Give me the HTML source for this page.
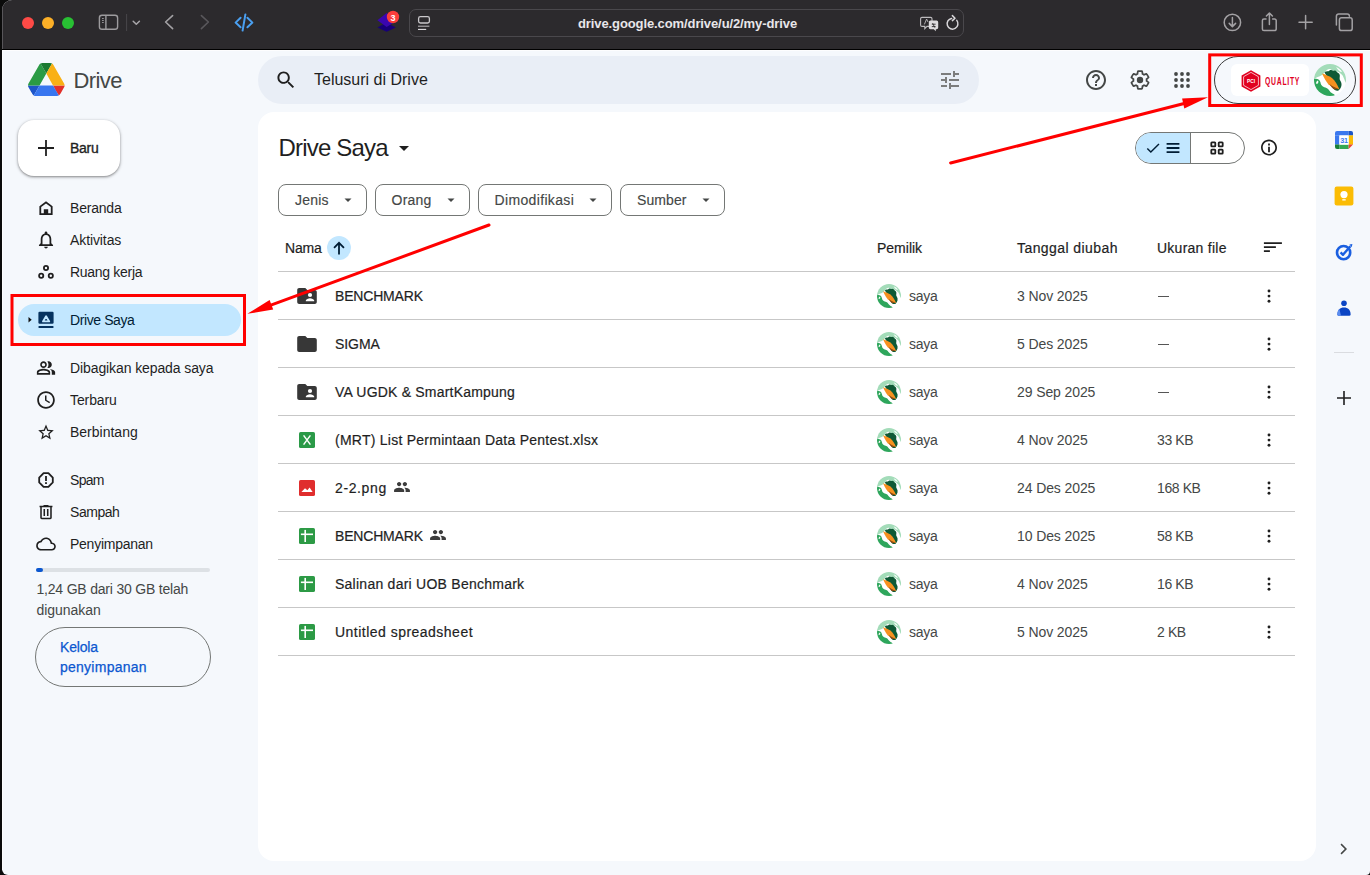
<!DOCTYPE html>
<html><head><meta charset="utf-8">
<style>
*{box-sizing:border-box;margin:0;padding:0}
html,body{width:1370px;height:875px;overflow:hidden;background:#0b0b0b;font-family:"Liberation Sans",sans-serif}
#win{position:absolute;left:2px;top:0;width:1368px;height:875px;background:#f5f8fc;border-radius:10px 0 4px 6px;overflow:hidden}
#tb{position:absolute;left:0;top:0;width:1368px;height:50px;background:#2c2a2d;border-bottom:1px solid #000}
#tbl{position:absolute;left:0;top:4px;width:1px;height:45px;background:#58565a}
.tl{position:absolute;top:17px;width:12px;height:12px;border-radius:50%}
.url{position:absolute;left:407px;top:9px;width:555px;height:28px;border:1px solid #4a484c;border-radius:7px}
.t{position:absolute;white-space:nowrap;color:#1f1f1f;line-height:1}
svg{position:absolute;overflow:visible}
.nav{font-size:14px;color:#1f1f1f}
.chip{position:absolute;top:184px;height:32px;border:1px solid #747775;border-radius:8px}
.hdr{font-size:14px;color:#1f1f1f;font-weight:normal}
.row{position:absolute;left:278px;width:1017px;height:1px;background:#c7c7c7}
.nm{font-size:14px;color:#1f1f1f}
.sub{font-size:14px;color:#444746}
.chipt{-webkit-text-stroke:0.15px #444746}
</style></head>
<body>
<svg width="0" height="0" style="position:absolute">
  <defs>
    <clipPath id="avc"><circle cx="16" cy="16" r="16"/></clipPath>
    <symbol id="avatar" viewBox="0 0 32 32">
    <g clip-path="url(#avc)">
      <rect width="32" height="32" fill="#ffffff"/>
      <path d="M0 0 H32 V19 C30 16 30 12 27 10 C24 6 20 8 17 5.5 C13 3.5 11 9 8 11 C5 13 2 13 0 15.5Z" fill="#a3dcb9"/>
      <path d="M22 3 C25 4 27 6 28 8 C26 8 24 6 22 3Z" fill="#ffffff"/>
      <path d="M0 15 C3 14 6 15.5 6.5 18.5 C7 22 9.5 23 12.5 24 C15 25 15.5 28 18.5 29.5 C20 30 21 31 21 32 H0Z" fill="#2ea65c"/>
      <path d="M4 16.5 C5 18 4 20 2.5 20 C1.5 19 2.5 17 4 16.5Z" fill="#ffffff"/>
      <path d="M10.5 8.5 C12 6.5 14 8 15.5 6.5 C17 5 18.5 7.5 20.5 6.5 C22 6 23 8.5 25 9.5 C27 12 24.5 14 26.5 17 C28.5 20 27.5 24 24.5 26.5 C22.5 27.5 20.5 26 19 24.5 L14 14Z" fill="#0f5a36"/>
      <path d="M8 9.5 C11.5 10.5 15 12 18 14 C21 16.5 23.5 21 25.5 25.5 C21.5 24.5 17.5 22.5 14.5 20.5 C12 17.5 10 13.5 8 9.5Z" fill="#f7911f"/>
      <path d="M15.5 20 C18 22 21 23.5 24.5 25 L20.5 25.5 C18.5 24.5 16.5 22.5 15.5 20Z" fill="#8c4b12"/>
    </g>
    </symbol>
  </defs>
</svg>
<div id="win">
  <!-- ============ SAFARI TOOLBAR ============ -->
  <div id="tb">
    <div id="tbl"></div>
  </div>
  <div style="position:absolute;left:0;top:50px;width:1368px;height:1px;background:#fdfdfe"></div>
  <div style="position:absolute;left:0;top:50px;width:1px;height:820px;background:#fdfdfe"></div>
  <div id="tb2" style="position:absolute;left:0;top:0;width:1368px;height:50px">
    <div class="tl" style="left:20px;background:#fe4a46"></div>
    <div class="tl" style="left:40px;background:#fdb027"></div>
    <div class="tl" style="left:60px;background:#28c033"></div>
    <!-- sidebar icon -->
    <svg style="left:0;top:0" width="1368" height="50">
      <g fill="none" stroke="#9d9b9e" stroke-width="1.4">
        <rect x="97.4" y="15.3" width="18.2" height="14" rx="2.6"/>
        <line x1="103.9" y1="15.5" x2="103.9" y2="29"/>
      </g>
      <g stroke="#9d9b9e" stroke-width="1.1">
        <line x1="100.1" y1="18.5" x2="101.7" y2="18.5"/>
        <line x1="100.1" y1="20.5" x2="101.7" y2="20.5"/>
        <line x1="100.1" y1="22.5" x2="101.7" y2="22.5"/>
      </g>
      <line x1="124.6" y1="14" x2="124.6" y2="31" stroke="#48464a" stroke-width="1"/>
      <path d="M131.2 21.2 L134.3 24.2 L137.4 21.2" fill="none" stroke="#a9a7aa" stroke-width="1.5" stroke-linecap="round" stroke-linejoin="round"/>
      <path d="M170.6 15.6 L163.6 22 L170.6 28.6" fill="none" stroke="#a3a1a4" stroke-width="1.6" stroke-linecap="round" stroke-linejoin="round"/>
      <path d="M199.4 15.6 L206.4 22 L199.4 28.6" fill="none" stroke="#59575b" stroke-width="1.6" stroke-linecap="round" stroke-linejoin="round"/>
      <g fill="none" stroke="#4a9ff0" stroke-width="2" stroke-linecap="round" stroke-linejoin="round">
        <path d="M238.6 17.8 L233.6 22.6 L238.6 27.2"/>
        <path d="M245.4 17.8 L250.4 22.6 L245.4 27.2"/>
        <path d="M243.4 14.4 L240.6 30.6"/>
      </g>
      <!-- extension -->
      <path d="M384.6 22.6 L393.8 27.4 L384.6 31.8 L375.4 27.4 Z" fill="#170078"/>
      <path d="M384.6 13 L395.4 20.2 L384.6 27 L375.4 20.2 Z" fill="#3a06b0"/>
      <circle cx="391" cy="17" r="6.2" fill="#fb3e3c"/>
      <text x="391" y="20.6" font-family="Liberation Sans" font-size="9" fill="#fff" text-anchor="middle" font-weight="bold">3</text>
      <!-- url icon -->
      <g fill="none" stroke="#c9c7ca" stroke-width="1.3">
        <rect x="416.6" y="16.6" width="10.8" height="6.4" rx="1.8"/>
      </g>
      <line x1="416" y1="26.2" x2="427.4" y2="26.2" stroke="#b4b2b5" stroke-width="1.1"/>
      <line x1="416" y1="29.4" x2="424.2" y2="29.4" stroke="#e2e0e3" stroke-width="1.1"/>
      <!-- translate -->
      <g>
        <path d="M920 17.4 h8.6 a1.4 1.4 0 0 1 1.4 1.4 v6.2 a1.4 1.4 0 0 1 -1.4 1.4 h-3.6 l-2.2 2.2 v-2.2 h-2.8 a1.4 1.4 0 0 1 -1.4 -1.4 v-6.2 a1.4 1.4 0 0 1 1.4 -1.4z" fill="none" stroke="#bdbbbe" stroke-width="1.1"/>
        <path d="M928.4 20.6 h6.2 a1.6 1.6 0 0 1 1.6 1.6 v5.4 a1.6 1.6 0 0 1 -1.6 1.6 h-0.8 v2 l-2 -2 h-3.4 a1.6 1.6 0 0 1 -1.6 -1.6 v-5.4 a1.6 1.6 0 0 1 1.6 -1.6z" fill="#dedcdf"/>
        <path d="M929.8 24.2 h3.8 M929.8 26.6 h3.8 M930.6 23.2 L932.8 27.6" stroke="#2c2a2d" stroke-width="0.9"/>
        <path d="M922.4 24.4 L924.6 19 L926 22" fill="none" stroke="#bdbbbe" stroke-width="0.9"/>
      </g>
      <!-- reload -->
      <path d="M954.8 20.4 A5.4 5.4 0 1 1 949.6 18.4" fill="none" stroke="#d9d7da" stroke-width="1.5" stroke-linecap="round"/>
      <path d="M950.4 15.6 L953 18.2 L950.4 20.6" fill="none" stroke="#d9d7da" stroke-width="1.5" stroke-linecap="round" stroke-linejoin="round"/>
      <!-- right icons -->
      <g fill="none" stroke="#a3a1a4" stroke-width="1.5" stroke-linecap="round" stroke-linejoin="round">
        <circle cx="1230.4" cy="22.4" r="8.2"/>
        <path d="M1230.4 17.6 V26.4 M1227.2 23.4 L1230.4 26.6 L1233.6 23.4"/>
        <g transform="translate(1 0)"><path d="M1263 19 h-2 a1.6 1.6 0 0 0 -1.6 1.6 v8.4 a1.6 1.6 0 0 0 1.6 1.6 h10.6 a1.6 1.6 0 0 0 1.6 -1.6 v-8.4 a1.6 1.6 0 0 0 -1.6 -1.6 h-2"/>
        <path d="M1266.4 24.6 V13.2 M1263.4 16 L1266.4 13 L1269.4 16"/></g>
        <path d="M1303.6 15.6 V28.8 M1297 22.2 H1310.2"/>
        <path d="M1334.4 25 V16.2 a2.2 2.2 0 0 1 2.2 -2.2 h8.6 a2.2 2.2 0 0 1 2.2 2.2"/>
        <rect x="1337.4" y="17.8" width="12.8" height="12.8" rx="2.2"/>
      </g>
    </svg>
    <div class="url"></div>
    <div class="t" style="left:576px;top:16.6px;font-size:13px;font-weight:bold;color:#e8e6e9;letter-spacing:-0.1px">drive.google.com/drive/u/2/my-drive</div>
  </div>
  <!-- ============ DRIVE HEADER ============ -->
  <svg style="left:25.7px;top:63px" width="36.6" height="33" viewBox="0 0 87.3 78" preserveAspectRatio="none">
    <path d="m6.6 66.85 3.85 6.65c.8 1.4 1.95 2.5 3.3 3.3l13.75-23.8h-27.5c0 1.55.4 3.1 1.2 4.5z" fill="#1e55c8"/>
    <path d="m43.65 25-13.75-23.8c-1.35.8-2.5 1.9-3.3 3.3l-25.4 44a9.06 9.06 0 0 0 -1.2 4.5h27.5z" fill="#2b9b45"/>
    <path d="m73.55 76.8c1.35-.8 2.5-1.9 3.3-3.3l1.6-2.75 7.65-13.25c.8-1.4 1.2-2.95 1.2-4.5h-27.502l5.852 11.5z" fill="#e2302a"/>
    <path d="m43.65 25 13.75-23.8c-1.35-.8-2.9-1.2-4.5-1.2h-18.5c-1.6 0-3.15.45-4.5 1.2z" fill="#1b7a31"/>
    <path d="m59.8 53h-32.3l-13.75 23.8c1.35.8 2.9 1.2 4.5 1.2h50.8c1.6 0 3.15-.45 4.5-1.2z" fill="#3876ef"/>
    <path d="m73.4 26.5-12.7-22c-.8-1.4-1.95-2.5-3.3-3.3l-13.75 23.8 16.15 28h27.45c0-1.55-.4-3.1-1.2-4.5z" fill="#f9b014"/>
  </svg>
  <div class="t" style="left:71.5px;top:69.5px;font-size:22px;color:#444746;letter-spacing:-0.6px">Drive</div>
  <div style="position:absolute;left:256px;top:56px;width:721px;height:48px;border-radius:24px;background:#e9eef6"></div>
  <svg style="left:272px;top:68px" width="24" height="24" viewBox="0 0 24 24"><path fill="#1f1f1f" transform="translate(12 12) scale(0.95) translate(-12 -12)" d="M15.5 14h-.79l-.28-.27C15.41 12.59 16 11.11 16 9.5 16 5.91 13.09 3 9.5 3S3 5.91 3 9.5 5.91 16 9.5 16c1.61 0 3.09-.59 4.23-1.57l.27.28v.79l5 4.99L20.49 19l-4.99-5zm-6 0C7.01 14 5 11.99 5 9.5S7.01 5 9.5 5 14 7.01 14 9.5 11.99 14 9.5 14z"/></svg>
  <div class="t" style="left:312px;top:72.3px;font-size:16px;color:#1f1f1f">Telusuri di Drive</div>
  <svg style="left:936px;top:68px" width="24" height="24" viewBox="0 0 24 24"><path fill="#7c7c7c" d="M3 17v2h6v-2H3zM3 5v2h10V5H3zm10 16v-2h8v-2h-8v-2h-2v6h2zM7 9v2H3v2h4v2h2V9H7zm14 4v-2H11v2h10zm-6-4h2V7h4V5h-4V3h-2v6z"/></svg>
  <!-- help / settings / apps -->
  <svg style="left:1082.4px;top:68px" width="24" height="24" viewBox="0 0 24 24"><path fill="#444746" d="M11 18h2v-2h-2v2zm1-16C6.48 2 2 6.48 2 12s4.48 10 10 10 10-4.48 10-10S17.52 2 12 2zm0 18c-4.41 0-8-3.59-8-8s3.59-8 8-8 8 3.59 8 8-3.59 8-8 8zm0-14c-2.21 0-4 1.79-4 4h2c0-1.1.9-2 2-2s2 .9 2 2c0 2-3 1.75-3 5h2c0-2.25 3-2.5 3-5 0-2.21-1.79-4-4-4z"/></svg>
  <svg style="left:1126.2px;top:68px" width="24" height="24" viewBox="0 0 24 24">
    <path fill="none" stroke="#444746" stroke-width="1.9" transform="translate(12 12) scale(0.92) translate(-12 -12)" d="M19.14 12.94c.04-.3.06-.61.06-.94 0-.32-.02-.64-.07-.94l2.03-1.58c.18-.14.23-.41.12-.61l-1.92-3.32c-.12-.22-.37-.29-.59-.22l-2.39.96c-.5-.38-1.03-.7-1.62-.94l-.36-2.54c-.04-.24-.24-.41-.48-.41h-3.84c-.24 0-.43.17-.47.41l-.36 2.54c-.59.24-1.130.57-1.62.94l-2.39-.96c-.22-.08-.47 0-.59.22L2.74 8.87c-.12.21-.08.47.12.61l2.03 1.58c-.05.3-.09.63-.09.94s.02.64.07.94l-2.03 1.58c-.18.14-.23.41-.12.61l1.92 3.32c.12.22.37.29.59.22l2.39-.96c.5.38 1.03.7 1.62.94l.36 2.54c.05.24.24.41.48.41h3.840c.24 0 .44-.17.47-.41l.36-2.54c.59-.24 1.13-.56 1.62-.94l2.39.96c.22.08.47 0 .59-.22l1.92-3.32c.12-.22.07-.47-.12-.61l-2.01-1.58z"/>
    <circle cx="12" cy="12" r="3.2" fill="#444746"/>
  </svg>
  <svg style="left:1168.2px;top:68px" width="24" height="24" viewBox="0 0 24 24" fill="#444746">
    <circle cx="6" cy="6" r="1.9"/><circle cx="12" cy="6" r="1.9"/><circle cx="18" cy="6" r="1.9"/>
    <circle cx="6" cy="12" r="1.9"/><circle cx="12" cy="12" r="1.9"/><circle cx="18" cy="12" r="1.9"/>
    <circle cx="6" cy="18" r="1.9"/><circle cx="12" cy="18" r="1.9"/><circle cx="18" cy="18" r="1.9"/>
  </svg>
  <!-- account chip -->
  <div style="position:absolute;left:1212px;top:56px;width:142px;height:48px;border-radius:24px;border:1px solid #3c3c3c"></div>
  <div style="position:absolute;left:1229px;top:64px;width:78px;height:32px;border-radius:6px;background:#fff"></div>
  <svg style="left:1237px;top:69px" width="24" height="24" viewBox="0 0 24 24">
    <path d="M12 1.2 L21.4 6.6 V17.4 L12 22.8 L2.6 17.4 V6.6 Z" fill="#e1001f"/>
    <path d="M12 3.4 L19.4 7.7 V16.3 L12 20.6 L4.6 16.3 V7.7 Z" fill="none" stroke="#fff" stroke-width="0.7"/>
    <text x="12" y="14.4" font-family="Liberation Sans" font-size="6" font-weight="bold" fill="#fff" text-anchor="middle" transform="translate(12 0) scale(0.8 1) translate(-12 0)">PCI</text>
  </svg>
  <div class="t" style="left:1263px;top:75.5px;font-size:11px;font-weight:bold;color:#e1001f;transform:scaleX(0.62);transform-origin:0 0;letter-spacing:1.2px">QUALITY</div>
  <svg style="left:1312px;top:64px" width="32" height="32" viewBox="0 0 32 32"><use href="#avatar"/></svg>
  <!-- ============ SIDEBAR ============ -->
  <div style="position:absolute;left:16px;top:120px;width:102px;height:56px;border-radius:16px;background:#fff;box-shadow:0 1px 2px rgba(0,0,0,0.3),0 1px 3px 1px rgba(0,0,0,0.15)"></div>
  <svg style="left:32px;top:136px" width="24" height="24" viewBox="0 0 24 24"><path fill="#1f1f1f" d="M20 12.9h-7.1V20h-1.8v-7.1H4v-1.8h7.1V4h1.8v7.1H20z"/></svg>
  <div class="t" style="left:68px;top:140.9px;font-size:14px;color:#1f1f1f;letter-spacing:-0.3px;-webkit-text-stroke:0.35px #1f1f1f">Baru</div>

  <!-- nav icons -->
  <svg style="left:32px;top:196px" width="24" height="24" viewBox="0 0 24 24"><path fill="#1f1f1f" d="M12 5.2 L18.6 10.2 V19 H5.4 V10.2Z M7.2 11.1 V17.2 H9.8 V13.2 H14.2 V17.2 H16.8 V11.1 L12 7.5Z" fill-rule="evenodd"/></svg>
  <svg style="left:32px;top:228px" width="24" height="24" viewBox="0 0 24 24"><path fill="#1f1f1f" transform="translate(12 12) scale(0.88) translate(-12 -12.2)" d="M12 22c1.1 0 2-.9 2-2h-4c0 1.1.89 2 2 2zm6-6v-5c0-3.07-1.64-5.64-4.5-6.32V4c0-.83-.67-1.5-1.5-1.5s-1.5.67-1.5 1.5v.68C7.63 5.36 6 7.92 6 11v5l-2 2v1h16v-1l-2-2zm-2 1H8v-6c0-2.48 1.51-4.5 4-4.5s4 2.02 4 4.5v6z"/></svg>
  <svg style="left:32px;top:260px" width="24" height="24" viewBox="0 0 24 24" fill="none" stroke="#1f1f1f" stroke-width="1.8"><circle cx="12" cy="8" r="2.1"/><circle cx="7.2" cy="15.8" r="2.1"/><circle cx="16.8" cy="15.8" r="2.1"/></svg>

  <div style="position:absolute;left:16px;top:304px;width:223px;height:32px;border-radius:16px;background:#c2e7ff"></div>
  <svg style="left:22px;top:308px" width="24" height="24" viewBox="0 0 24 24"><path fill="#111" d="M4.5 9 L7.7 11.8 L4.5 14.6Z"/></svg>
  <svg style="left:32px;top:308px" width="24" height="24" viewBox="0 0 24 24"><rect x="4.4" y="3.8" width="15.2" height="12" rx="1.2" fill="#07335f"/><rect x="4.4" y="18" width="15.2" height="2.1" rx="0.8" fill="#07335f"/><path d="M12.1 8.2 L15.2 13.4 H9 Z" fill="none" stroke="#c2e7ff" stroke-width="1.9" stroke-linejoin="round"/></svg>

  <svg style="left:32px;top:356px" width="24" height="24" viewBox="0 0 24 24"><path fill="#1f1f1f" transform="translate(12 12) scale(0.83) translate(-12 -12)" d="M16.67 13.13C18.04 14.06 19 15.32 19 17v3h4v-3c0-2.18-3.57-3.47-6.33-3.87zM15 12c2.21 0 4-1.79 4-4s-1.79-4-4-4c-.47 0-.91.1-1.33.24C14.5 5.27 15 6.58 15 8s-.5 2.73-1.33 3.76c.42.14.86.24 1.33.24zM9 12c2.21 0 4-1.79 4-4s-1.79-4-4-4-4 1.79-4 4 1.79 4 4 4zm0-6c1.1 0 2 .9 2 2s-.9 2-2 2-2-.9-2-2 .9-2 2-2zM9 13c-2.67 0-8 1.34-8 4v3h16v-3c0-2.66-5.33-4-8-4zm6 5H3v-.99C3.2 16.29 6.3 15 9 15s5.8 1.29 6 2v1z"/></svg>
  <svg style="left:32px;top:388px" width="24" height="24" viewBox="0 0 24 24"><path fill="#1f1f1f" d="M11.99 3.2C7.13 3.2 3.2 7.14 3.2 12s3.93 8.8 8.79 8.8c4.87 0 8.81-3.94 8.81-8.8S16.86 3.2 11.99 3.2zM12 19c-3.87 0-7-3.13-7-7s3.13-7 7-7 7 3.13 7 7-3.13 7-7 7zm.5-11.6H11v5.2l4.3 2.6.75-1.2-3.55-2.1z"/></svg>
  <svg style="left:32px;top:420px" width="24" height="24" viewBox="0 0 24 24"><path fill="#1f1f1f" d="M22 9.24l-7.19-.62L12 2 9.19 8.63 2 9.24l5.46 4.73L5.82 21 12 17.27 18.18 21l-1.63-7.03L22 9.24zM12 15.4l-3.76 2.27 1-4.28-3.32-2.88 4.38-.38L12 6.1l1.71 4.04 4.38.38-3.32 2.88 1 4.28L12 15.4z" transform="translate(12 12) scale(0.78) translate(-12 -11.5)"/></svg>

  <svg style="left:32px;top:468px" width="24" height="24" viewBox="0 0 24 24"><path fill="none" stroke="#1f1f1f" stroke-width="1.8" stroke-linejoin="round" d="M9.6 5.2 H14.4 L18.8 9.6 V14.4 L14.4 18.8 H9.6 L5.2 14.4 V9.6Z"/><rect x="11.1" y="8" width="1.8" height="5" fill="#1f1f1f"/><rect x="11.1" y="14.2" width="1.8" height="1.8" fill="#1f1f1f"/></svg>
  <svg style="left:32px;top:500px" width="24" height="24" viewBox="0 0 24 24"><path fill="#1f1f1f" transform="translate(12 12) scale(0.86) translate(-12 -12)" d="M7 20.4q-.7 0-1.2-.5T5.3 18.7V6.6H4.5V4.8h4.6V3.9h5.8v.9h4.6v1.8h-.8v12.1q0 .7-.5 1.2t-1.2.5ZM16.9 6.6H7.1v12h9.8ZM9.1 16.6h1.8V8.6H9.1Zm4 0h1.8V8.6h-1.8Z"/></svg>
  <svg style="left:32px;top:532px" width="24" height="24" viewBox="0 0 24 24"><path fill="#1f1f1f" d="M19.35 10.04C18.67 6.59 15.64 4 12 4 9.11 4 6.6 5.64 5.35 8.04 2.34 8.36 0 10.91 0 14c0 3.31 2.690 6 6 6h13c2.76 0 5-2.24 5-5 0-2.64-2.05-4.78-4.65-4.96zM19 18H6c-2.21 0-4-1.79-4-4 0-2.05 1.53-3.76 3.56-3.97l1.07-.11.5-.95C8.08 7.14 9.94 6 12 6c2.62 0 4.88 1.86 5.39 4.43l.3 1.5 1.53.11c1.56.1 2.78 1.41 2.78 2.96 0 1.65-1.35 3-3 3z" transform="translate(12 12) scale(0.82) translate(-12 -12)"/></svg>

  <div class="t nav" style="left:68px;top:200.9px;letter-spacing:-0.2px">Beranda</div>
  <div class="t nav" style="left:68px;top:232.9px;letter-spacing:-0.1px">Aktivitas</div>
  <div class="t nav" style="left:68px;top:264.9px;letter-spacing:-0.3px">Ruang kerja</div>
  <div class="t nav" style="left:68px;top:312.9px;letter-spacing:-0.4px;color:#001d35">Drive Saya</div>
  <div class="t nav" style="left:68px;top:360.9px;letter-spacing:-0.1px">Dibagikan kepada saya</div>
  <div class="t nav" style="left:68px;top:392.9px;letter-spacing:-0.1px">Terbaru</div>
  <div class="t nav" style="left:68px;top:424.9px">Berbintang</div>
  <div class="t nav" style="left:68px;top:472.9px;letter-spacing:-0.7px">Spam</div>
  <div class="t nav" style="left:68px;top:504.9px;letter-spacing:-0.45px">Sampah</div>
  <div class="t nav" style="left:68px;top:536.9px;letter-spacing:-0.25px">Penyimpanan</div>

  <div style="position:absolute;left:34px;top:568px;width:174px;height:4px;border-radius:2px;background:#dde1e5"></div>
  <div style="position:absolute;left:34px;top:568px;width:7px;height:4px;border-radius:2px;background:#0b57d0"></div>
  <div class="t" style="left:34.5px;top:582.4px;font-size:14px;color:#444746;letter-spacing:-0.2px">1,24 GB dari 30 GB telah</div>
  <div class="t" style="left:34.5px;top:602.6px;font-size:14px;color:#444746;letter-spacing:-0.05px">digunakan</div>
  <div style="position:absolute;left:33px;top:627px;width:176px;height:60px;border-radius:30px;border:1px solid #747775"></div>
  <div class="t" style="left:58px;top:639.6px;font-size:14px;color:#0b57d0;letter-spacing:-0.2px;-webkit-text-stroke:0.25px #0b57d0">Kelola</div>
  <div class="t" style="left:58px;top:660.4px;font-size:14px;color:#0b57d0;letter-spacing:0.25px;-webkit-text-stroke:0.25px #0b57d0">penyimpanan</div>
  <!-- ============ MAIN CARD ============ -->
  <div style="position:absolute;left:256px;top:112px;width:1058px;height:749px;border-radius:16px;background:#fff"></div>
  <div class="t" style="left:276.5px;top:135.6px;font-size:24px;color:#1f1f1f;letter-spacing:-0.82px">Drive Saya</div>
  <svg style="left:390px;top:136px" width="24" height="24" viewBox="0 0 24 24"><path fill="#1f1f1f" d="M7 10l5 5 5-5z"/></svg>

  <!-- view toggle -->
  <div style="position:absolute;left:1133px;top:132px;width:110px;height:32px;border-radius:16px;border:1px solid #747775;overflow:hidden;background:#fff">
    <div style="position:absolute;left:0;top:0;width:55px;height:30px;background:#c2e7ff;border-right:1px solid #747775"></div>
  </div>
  <svg style="left:1139px;top:136px" width="24" height="24" viewBox="0 0 24 24"><path fill="#001d35" d="M9 16.17L4.83 12l-1.42 1.41L9 19 21 7l-1.41-1.41z" transform="translate(12 12) scale(0.72) translate(-12 -12)"/></svg>
  <svg style="left:1160px;top:136px" width="24" height="24" viewBox="0 0 24 24"><path fill="#001d35" d="M4.6 7h12.8v1.8H4.6zM4.6 11.1h12.8v1.8H4.6zM4.6 15.2h12.8v1.8H4.6z"/></svg>
  <svg style="left:1203px;top:136px" width="24" height="24" viewBox="0 0 24 24" fill="none" stroke="#1f1f1f" stroke-width="1.8"><rect x="6.3" y="6.3" width="4" height="4" rx="0.6"/><rect x="13.7" y="6.3" width="4" height="4" rx="0.6"/><rect x="6.3" y="13.7" width="4" height="4" rx="0.6"/><rect x="13.7" y="13.7" width="4" height="4" rx="0.6"/></svg>
  <svg style="left:1255px;top:136px" width="24" height="24" viewBox="0 0 24 24"><path fill="#1f1f1f" d="M11.1 7.6h1.8v1.8h-1.8zm0 3.2h1.8v5.4h-1.8zm.9-7.2c-4.42 0-8 3.58-8 8s3.58 8 8 8 8-3.58 8-8-3.58-8-8-8zm0 14.3c-3.48 0-6.3-2.82-6.3-6.3s2.82-6.3 6.3-6.3 6.3 2.82 6.3 6.3-2.82 6.3-6.3 6.3z"/></svg>

  <!-- chips -->
  <div class="chip" style="left:276px;width:89px"></div>
  <div class="t sub chipt" style="left:293px;top:192.7px;letter-spacing:0.2px">Jenis</div>
  <svg style="left:333.8px;top:188px" width="24" height="24" viewBox="0 0 24 24"><path fill="#444746" d="M8.5 10.5l3.5 3.5 3.5-3.5z"/></svg>
  <div class="chip" style="left:373px;width:95px"></div>
  <div class="t sub chipt" style="left:389.5px;top:192.7px;letter-spacing:0.25px">Orang</div>
  <svg style="left:437px;top:188px" width="24" height="24" viewBox="0 0 24 24"><path fill="#444746" d="M8.5 10.5l3.5 3.5 3.5-3.5z"/></svg>
  <div class="chip" style="left:476px;width:134px"></div>
  <div class="t sub chipt" style="left:492.5px;top:192.7px;letter-spacing:0.35px">Dimodifikasi</div>
  <svg style="left:578.8px;top:188px" width="24" height="24" viewBox="0 0 24 24"><path fill="#444746" d="M8.5 10.5l3.5 3.5 3.5-3.5z"/></svg>
  <div class="chip" style="left:618px;width:105px"></div>
  <div class="t sub chipt" style="left:635px;top:192.7px;letter-spacing:0.1px">Sumber</div>
  <svg style="left:691.8px;top:188px" width="24" height="24" viewBox="0 0 24 24"><path fill="#444746" d="M8.5 10.5l3.5 3.5 3.5-3.5z"/></svg>

  <!-- table header -->
  <div class="t hdr" style="left:283px;top:241.1px;letter-spacing:-0.2px;-webkit-text-stroke:0.2px #1f1f1f">Nama</div>
  <div style="position:absolute;left:325px;top:236px;width:24px;height:24px;border-radius:12px;background:#c2e7ff"></div>
  <svg style="left:325px;top:236px" width="24" height="24" viewBox="0 0 24 24"><path fill="#001d35" d="M12 5.6 L17.6 11.2 L16.3 12.5 L12.9 9.1 V18.4 H11.1 V9.1 L7.7 12.5 L6.4 11.2Z"/></svg>
  <div class="t hdr" style="left:875px;top:241.1px;-webkit-text-stroke:0.2px #1f1f1f">Pemilik</div>
  <div class="t hdr" style="left:1015px;top:241.1px;letter-spacing:0.42px;-webkit-text-stroke:0.2px #1f1f1f">Tanggal diubah</div>
  <div class="t hdr" style="left:1155px;top:241.1px;letter-spacing:0.25px;-webkit-text-stroke:0.2px #1f1f1f">Ukuran file</div>
  <svg style="left:1258px;top:236px" width="24" height="24" viewBox="0 0 24 24"><path fill="#1f1f1f" d="M3.9 6.2h18v1.7h-18zM3.9 10.2h12v1.7h-12zM3.9 14.2h6v1.7h-6z"/></svg>
  <div class="row" style="top:271px;left:276px"></div>
  <!-- ============ ROWS ============ -->
<svg style="left:293px;top:284px" width="24" height="24" viewBox="0 0 24 24"><path fill="#373737" d="M19.8 6h-7.5l-2-2H4.2c-1.2 0-2 .9-2 2L2.2 18c0 1.1.9 2 2 2h15.6c1.1 0 2-.9 2-2V8c0-1.1-.9-2-2-2z"/><circle cx="15" cy="11" r="2.1" fill="#fff"/><path fill="#fff" d="M10.8 17.2v-.6c0-1.5 2.6-2.4 4.2-2.4s4.2.9 4.2 2.4v.6z"/></svg>
  <div class="t nm" style="left:333px;top:288.85px;letter-spacing:-0.18px;-webkit-text-stroke:0.2px #1f1f1f" id="n0">BENCHMARK</div>
  <svg style="left:875px;top:284px" width="24" height="24" viewBox="0 0 32 32"><use href="#avatar"/></svg>
  <div class="t sub" style="left:907px;top:288.85px;letter-spacing:-0.3px">saya</div>
  <div id="d0" class="t sub" style="left:1015px;top:288.85px;letter-spacing:-0.1px">3 Nov 2025</div>
  <div style="position:absolute;left:1156px;top:296.2px;width:11px;height:1px;background:#555"></div>
  <svg style="left:1255px;top:284px" width="24" height="24" viewBox="0 0 24 24" fill="#1f1f1f"><circle cx="12" cy="7" r="1.45"/><circle cx="12" cy="12.1" r="1.45"/><circle cx="12" cy="17.2" r="1.45"/></svg>
  <div class="row" style="top:319px;left:276px"></div>
<svg style="left:293px;top:332px" width="24" height="24" viewBox="0 0 24 24"><path fill="#373737" d="M10.3 4H4.2c-1.2 0-2 .9-2 2L2.2 18c0 1.1.9 2 2 2h15.6c1.1 0 2-.9 2-2V8c0-1.1-.9-2-2-2h-7.5l-2-2z"/></svg>
  <div class="t nm" style="left:333px;top:336.85px;letter-spacing:-0.07px;-webkit-text-stroke:0.2px #1f1f1f" id="n1">SIGMA</div>
  <svg style="left:875px;top:332px" width="24" height="24" viewBox="0 0 32 32"><use href="#avatar"/></svg>
  <div class="t sub" style="left:907px;top:336.85px;letter-spacing:-0.3px">saya</div>
  <div id="d1" class="t sub" style="left:1015px;top:336.85px;letter-spacing:-0.1px">5 Des 2025</div>
  <div style="position:absolute;left:1156px;top:344.2px;width:11px;height:1px;background:#555"></div>
  <svg style="left:1255px;top:332px" width="24" height="24" viewBox="0 0 24 24" fill="#1f1f1f"><circle cx="12" cy="7" r="1.45"/><circle cx="12" cy="12.1" r="1.45"/><circle cx="12" cy="17.2" r="1.45"/></svg>
  <div class="row" style="top:367px;left:276px"></div>
<svg style="left:293px;top:380px" width="24" height="24" viewBox="0 0 24 24"><path fill="#373737" d="M19.8 6h-7.5l-2-2H4.2c-1.2 0-2 .9-2 2L2.2 18c0 1.1.9 2 2 2h15.6c1.1 0 2-.9 2-2V8c0-1.1-.9-2-2-2z"/><circle cx="15" cy="11" r="2.1" fill="#fff"/><path fill="#fff" d="M10.8 17.2v-.6c0-1.5 2.6-2.4 4.2-2.4s4.2.9 4.2 2.4v.6z"/></svg>
  <div class="t nm" style="left:333px;top:384.85px;letter-spacing:0.2px;-webkit-text-stroke:0.2px #1f1f1f" id="n2">VA UGDK &amp; SmartKampung</div>
  <svg style="left:875px;top:380px" width="24" height="24" viewBox="0 0 32 32"><use href="#avatar"/></svg>
  <div class="t sub" style="left:907px;top:384.85px;letter-spacing:-0.3px">saya</div>
  <div id="d2" class="t sub" style="left:1015px;top:384.85px;letter-spacing:-0.1px">29 Sep 2025</div>
  <div style="position:absolute;left:1156px;top:392.2px;width:11px;height:1px;background:#555"></div>
  <svg style="left:1255px;top:380px" width="24" height="24" viewBox="0 0 24 24" fill="#1f1f1f"><circle cx="12" cy="7" r="1.45"/><circle cx="12" cy="12.1" r="1.45"/><circle cx="12" cy="17.2" r="1.45"/></svg>
  <div class="row" style="top:415px;left:276px"></div>
<svg style="left:293px;top:428px" width="24" height="24" viewBox="0 0 24 24"><rect x="4" y="4" width="16" height="16" rx="1.6" fill="#2b9a48"/><path d="M8.6 7.4 L15.4 16.6 M15.4 7.4 L8.6 16.6" stroke="#fff" stroke-width="1.5"/></svg>
  <div class="t nm" style="left:333px;top:432.85px;letter-spacing:0.25px;-webkit-text-stroke:0.2px #1f1f1f" id="n3">(MRT) List Permintaan Data Pentest.xlsx</div>
  <svg style="left:875px;top:428px" width="24" height="24" viewBox="0 0 32 32"><use href="#avatar"/></svg>
  <div class="t sub" style="left:907px;top:432.85px;letter-spacing:-0.3px">saya</div>
  <div id="d3" class="t sub" style="left:1015px;top:432.85px;letter-spacing:-0.1px">4 Nov 2025</div>
  <div id="z3" class="t sub" style="left:1155px;top:432.85px;letter-spacing:-0.4px">33 KB</div>
  <svg style="left:1255px;top:428px" width="24" height="24" viewBox="0 0 24 24" fill="#1f1f1f"><circle cx="12" cy="7" r="1.45"/><circle cx="12" cy="12.1" r="1.45"/><circle cx="12" cy="17.2" r="1.45"/></svg>
  <div class="row" style="top:463px;left:276px"></div>
<svg style="left:293px;top:476px" width="24" height="24" viewBox="0 0 24 24"><rect x="4" y="4" width="16" height="16" rx="1.6" fill="#e02d2d"/><path fill="#fff" d="M6.4 16 L10 12.2 L12.4 14.2 L14.6 11.6 L17.6 16Z"/></svg>
  <div class="t nm" style="left:333px;top:480.85px;letter-spacing:0.62px;-webkit-text-stroke:0.2px #1f1f1f" id="n4">2-2.png</div>
  <svg style="left:875px;top:476px" width="24" height="24" viewBox="0 0 32 32"><use href="#avatar"/></svg>
  <div class="t sub" style="left:907px;top:480.85px;letter-spacing:-0.3px">saya</div>
  <div id="d4" class="t sub" style="left:1015px;top:480.85px;letter-spacing:-0.1px">24 Des 2025</div>
  <div id="z4" class="t sub" style="left:1155px;top:480.85px;letter-spacing:-0.4px">168 KB</div>
  <svg style="left:1255px;top:476px" width="24" height="24" viewBox="0 0 24 24" fill="#1f1f1f"><circle cx="12" cy="7" r="1.45"/><circle cx="12" cy="12.1" r="1.45"/><circle cx="12" cy="17.2" r="1.45"/></svg>
  <div class="row" style="top:511px;left:276px"></div>
  <svg class="shr4" style="left:388px;top:475px" width="24" height="24" viewBox="0 0 24 24"><path fill="#3c3c3c" transform="translate(12 12) scale(0.72) translate(-12 -12)" d="M16 11c1.66 0 2.99-1.34 2.99-3S17.66 5 16 5c-1.66 0-3 1.34-3 3s1.34 3 3 3zm-8 0c1.66 0 2.99-1.34 2.99-3S9.66 5 8 5C6.34 5 5 6.34 5 8s1.34 3 3 3zm0 2c-2.33 0-7 1.17-7 3.5V19h14v-2.5c0-2.33-4.67-3.5-7-3.5zm8 0c-.29 0-.62.02-.97.05 1.16.84 1.970 1.97 1.97 3.45V19h6v-2.5c0-2.33-4.67-3.5-7-3.5z"/></svg>
<svg style="left:293px;top:524px" width="24" height="24" viewBox="0 0 24 24"><rect x="4" y="4" width="16" height="16" rx="1.6" fill="#2c9a45"/><rect x="5.9" y="9.5" width="12.1" height="1.6" fill="#fff"/><rect x="9.4" y="5.9" width="1.6" height="12.1" fill="#fff"/></svg>
  <div class="t nm" style="left:333px;top:528.85px;letter-spacing:-0.18px;-webkit-text-stroke:0.2px #1f1f1f" id="n5">BENCHMARK</div>
  <svg style="left:875px;top:524px" width="24" height="24" viewBox="0 0 32 32"><use href="#avatar"/></svg>
  <div class="t sub" style="left:907px;top:528.85px;letter-spacing:-0.3px">saya</div>
  <div id="d5" class="t sub" style="left:1015px;top:528.85px;letter-spacing:-0.1px">10 Des 2025</div>
  <div id="z5" class="t sub" style="left:1155px;top:528.85px;letter-spacing:-0.4px">58 KB</div>
  <svg style="left:1255px;top:524px" width="24" height="24" viewBox="0 0 24 24" fill="#1f1f1f"><circle cx="12" cy="7" r="1.45"/><circle cx="12" cy="12.1" r="1.45"/><circle cx="12" cy="17.2" r="1.45"/></svg>
  <div class="row" style="top:559px;left:276px"></div>
  <svg class="shr5" style="left:424px;top:523px" width="24" height="24" viewBox="0 0 24 24"><path fill="#3c3c3c" transform="translate(12 12) scale(0.72) translate(-12 -12)" d="M16 11c1.66 0 2.99-1.34 2.99-3S17.66 5 16 5c-1.66 0-3 1.34-3 3s1.34 3 3 3zm-8 0c1.66 0 2.99-1.34 2.99-3S9.66 5 8 5C6.34 5 5 6.34 5 8s1.34 3 3 3zm0 2c-2.33 0-7 1.17-7 3.5V19h14v-2.5c0-2.33-4.67-3.5-7-3.5zm8 0c-.29 0-.62.02-.97.05 1.16.84 1.970 1.97 1.97 3.45V19h6v-2.5c0-2.33-4.67-3.5-7-3.5z"/></svg>
<svg style="left:293px;top:572px" width="24" height="24" viewBox="0 0 24 24"><rect x="4" y="4" width="16" height="16" rx="1.6" fill="#2c9a45"/><rect x="5.9" y="9.5" width="12.1" height="1.6" fill="#fff"/><rect x="9.4" y="5.9" width="1.6" height="12.1" fill="#fff"/></svg>
  <div class="t nm" style="left:333px;top:576.85px;letter-spacing:0.25px;-webkit-text-stroke:0.2px #1f1f1f" id="n6">Salinan dari UOB Benchmark</div>
  <svg style="left:875px;top:572px" width="24" height="24" viewBox="0 0 32 32"><use href="#avatar"/></svg>
  <div class="t sub" style="left:907px;top:576.85px;letter-spacing:-0.3px">saya</div>
  <div id="d6" class="t sub" style="left:1015px;top:576.85px;letter-spacing:-0.1px">4 Nov 2025</div>
  <div id="z6" class="t sub" style="left:1155px;top:576.85px;letter-spacing:-0.4px">16 KB</div>
  <svg style="left:1255px;top:572px" width="24" height="24" viewBox="0 0 24 24" fill="#1f1f1f"><circle cx="12" cy="7" r="1.45"/><circle cx="12" cy="12.1" r="1.45"/><circle cx="12" cy="17.2" r="1.45"/></svg>
  <div class="row" style="top:607px;left:276px"></div>
<svg style="left:293px;top:620px" width="24" height="24" viewBox="0 0 24 24"><rect x="4" y="4" width="16" height="16" rx="1.6" fill="#2c9a45"/><rect x="5.9" y="9.5" width="12.1" height="1.6" fill="#fff"/><rect x="9.4" y="5.9" width="1.6" height="12.1" fill="#fff"/></svg>
  <div class="t nm" style="left:333px;top:624.85px;letter-spacing:0.48px;-webkit-text-stroke:0.2px #1f1f1f" id="n7">Untitled spreadsheet</div>
  <svg style="left:875px;top:620px" width="24" height="24" viewBox="0 0 32 32"><use href="#avatar"/></svg>
  <div class="t sub" style="left:907px;top:624.85px;letter-spacing:-0.3px">saya</div>
  <div id="d7" class="t sub" style="left:1015px;top:624.85px;letter-spacing:-0.1px">5 Nov 2025</div>
  <div id="z7" class="t sub" style="left:1155px;top:624.85px;letter-spacing:-0.4px">2 KB</div>
  <svg style="left:1255px;top:620px" width="24" height="24" viewBox="0 0 24 24" fill="#1f1f1f"><circle cx="12" cy="7" r="1.45"/><circle cx="12" cy="12.1" r="1.45"/><circle cx="12" cy="17.2" r="1.45"/></svg>
  <div class="row" style="top:655px;left:276px"></div>
  <!-- ============ RIGHT PANEL ============ -->
  <svg style="left:1330px;top:128px" width="24" height="24" viewBox="0 0 24 24">
    <path d="M5 3 H16.6 V7.4 H3 V5 A2 2 0 0 1 5 3Z" fill="#3b78ee"/>
    <path d="M16.6 3 H19 A2 2 0 0 1 21 5 V7.4 H16.6Z" fill="#1c56c7"/>
    <rect x="3" y="7.4" width="4.4" height="9.2" fill="#3b78ee"/>
    <rect x="16.6" y="7.4" width="4.4" height="9.2" fill="#fbbc04"/>
    <rect x="7.4" y="16.6" width="9.2" height="4.4" fill="#34a853"/>
    <path d="M3 16.6 H7.4 V21 H5 A2 2 0 0 1 3 19Z" fill="#188038"/>
    <path d="M16.6 16.6 H21 L16.6 21Z" fill="#ea4335"/>
    <rect x="7.4" y="7.4" width="9.2" height="9.2" fill="#fff"/>
    <text x="12" y="14.9" font-family="Liberation Sans" font-size="7.2" font-weight="bold" fill="#3b78ee" text-anchor="middle" letter-spacing="-0.3">31</text>
  </svg>
  <svg style="left:1330px;top:184px" width="24" height="24" viewBox="0 0 24 24">
    <rect x="2.6" y="2.6" width="18.8" height="18.8" rx="2.2" fill="#fbbc04"/>
    <circle cx="12" cy="10.6" r="3.6" fill="#fff"/>
    <rect x="10.3" y="15.2" width="3.4" height="1.3" fill="#fff"/>
  </svg>
  <svg style="left:1330px;top:240px" width="24" height="24" viewBox="0 0 24 24">
    <circle cx="11.6" cy="12.6" r="6.6" fill="none" stroke="#1a5fe0" stroke-width="2.6"/>
    <path d="M8.6 12.4 L11 14.8 L18.4 6.2" fill="none" stroke="#1a5fe0" stroke-width="2.4" stroke-linejoin="round"/>
    <path d="M17.4 4.4 L20.4 4 L19.8 7.2Z" fill="#1a5fe0"/>
  </svg>
  <svg style="left:1330px;top:296px" width="24" height="24" viewBox="0 0 24 24">
    <circle cx="12" cy="7.2" r="2.8" fill="#0b45c4"/>
    <path d="M5.4 18.4 C5.4 14 8 11.6 12 11.6 C16 11.6 18.6 14 18.6 18.4 Q18.6 19.8 17.2 19.8 H6.8 Q5.4 19.8 5.4 18.4Z" fill="#0b45c4"/>
    <path d="M5.4 18.4 C5.4 15.6 6.2 14 7.4 13 L9 19.8 H6.8 Q5.4 19.8 5.4 18.4Z" fill="#5b8df0"/>
  </svg>
  <div style="position:absolute;left:1332px;top:352px;width:20px;height:1px;background:#dadce0"></div>
  <svg style="left:1330px;top:385.5px" width="24" height="24" viewBox="0 0 24 24"><path fill="#1f1f1f" d="M19 12.8h-6.2V19h-1.6v-6.2H5v-1.6h6.2V5h1.6v6.2H19z"/></svg>
  <svg style="left:1330px;top:837px" width="24" height="24" viewBox="0 0 24 24"><path fill="#444746" d="M9.6 6.6 L8.5 7.7 L12.8 12 L8.5 16.3 L9.6 17.4 L15 12z"/></svg>

  <!-- ============ ANNOTATIONS ============ -->
  <svg style="left:-2px;top:0" width="1370" height="875">
    <g fill="none" stroke="#ff0000" stroke-width="3">
      <rect x="12" y="295.5" width="232.5" height="49"/>
      <rect x="1209.7" y="54.9" width="151.6" height="50.6"/>
    </g>
    <g stroke="#ff0000" stroke-width="3" stroke-linecap="round">
      <line x1="489" y1="225" x2="262" y2="308.4"/>
      <line x1="950.6" y1="163" x2="1190" y2="102"/>
    </g>
    <path d="M247.4 313.8 L269.6 300 L273.2 309.6Z" fill="#ff0000"/>
    <path d="M1208 97.2 L1182.1 98.5 L1184.3 108.5Z" fill="#ff0000"/>
  </svg>
</div>
</body></html>
